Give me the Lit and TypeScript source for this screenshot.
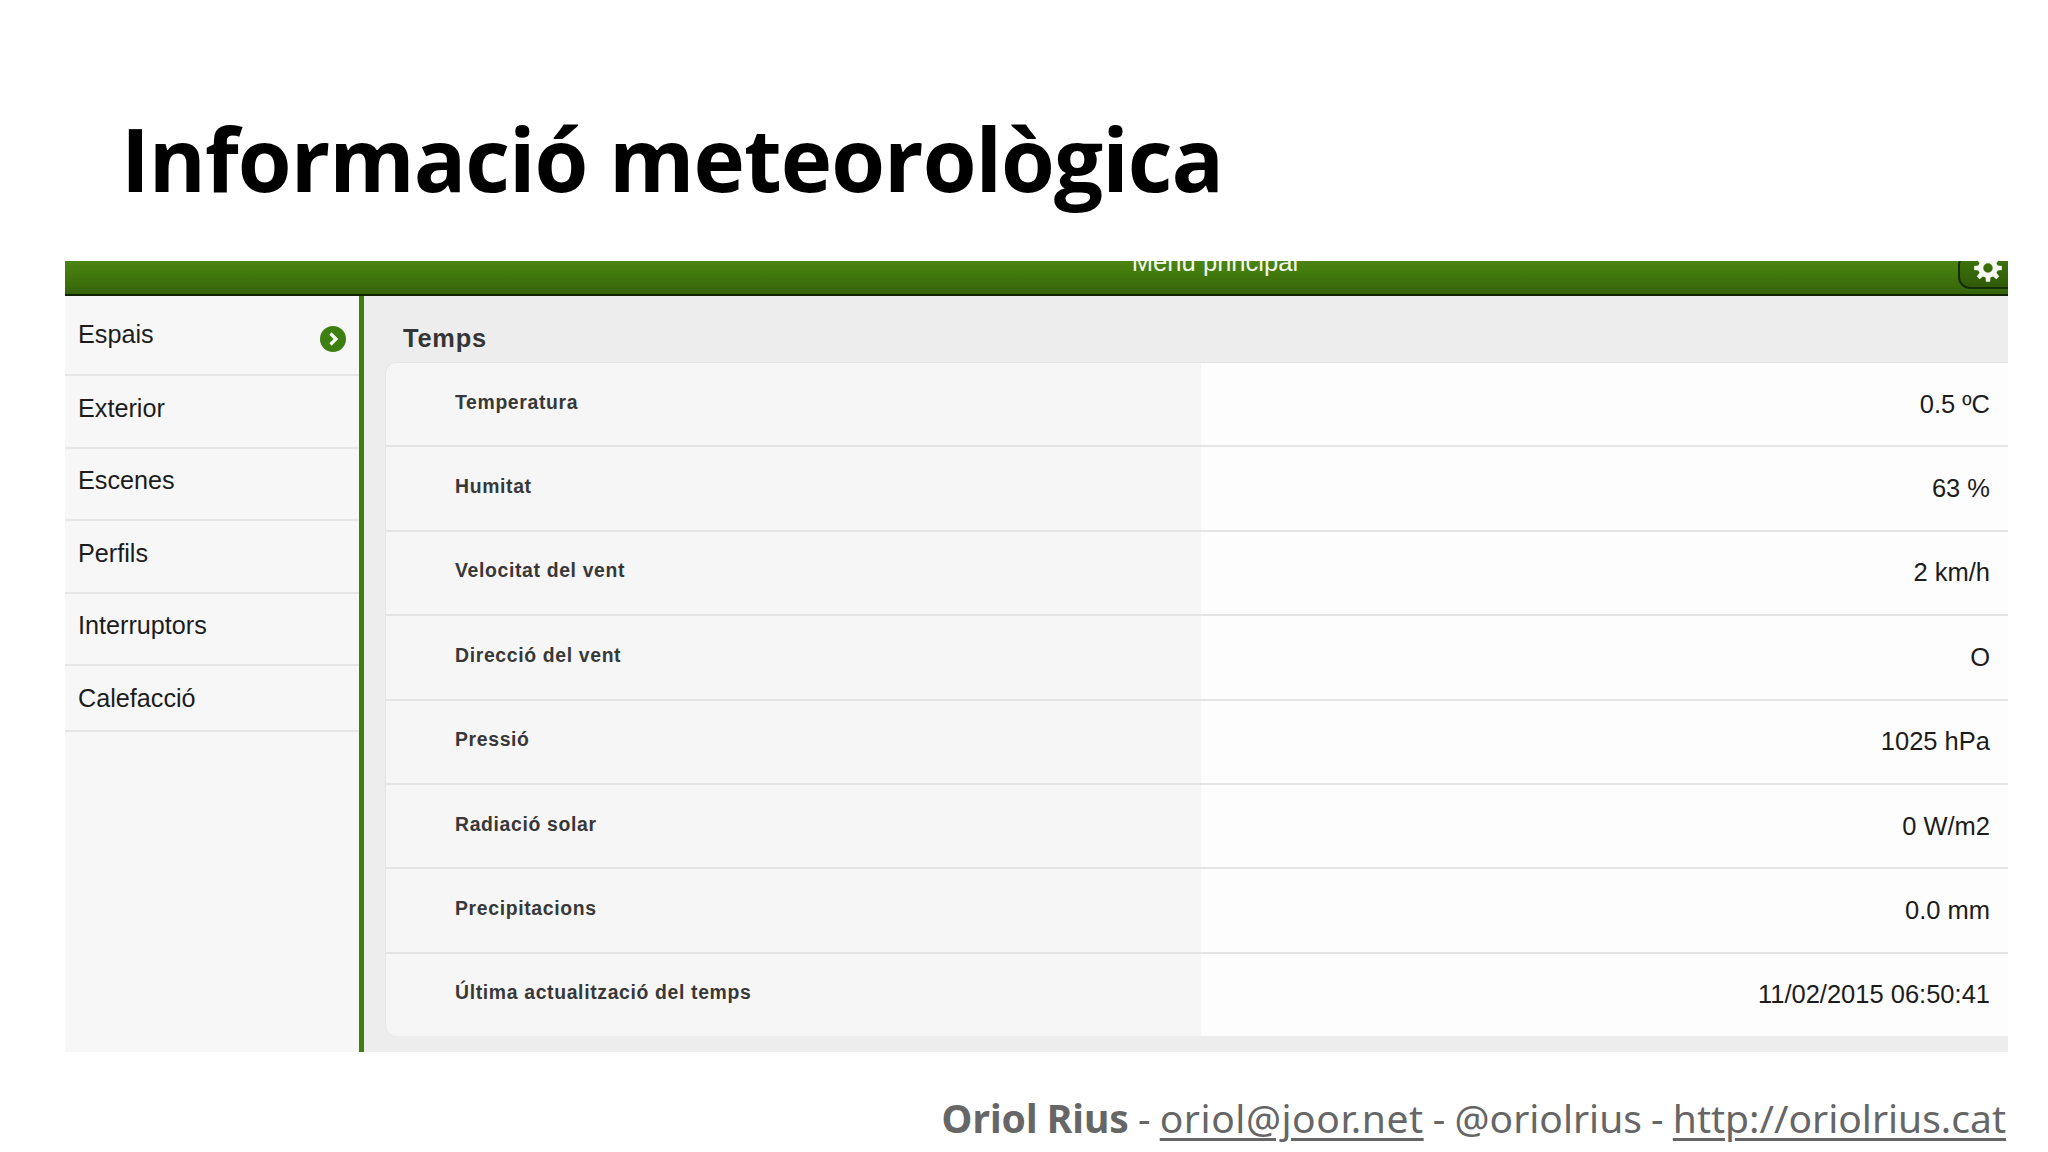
import { LitElement, html, css, svg } from "lit";
import { customElement } from "lit/decorators.js";

const MENU = ["Espais", "Exterior", "Escenes", "Perfils", "Interruptors", "Calefacció"];
const ROWS: [string, string][] = [
  ["Temperatura", "0.5 ºC"],
  ["Humitat", "63 %"],
  ["Velocitat del vent", "2 km/h"],
  ["Direcció del vent", "O"],
  ["Pressió", "1025 hPa"],
  ["Radiació solar", "0 W/m2"],
  ["Precipitacions", "0.0 mm"],
  ["Última actualització del temps", "11/02/2015 06:50:41"],
];

function gearPath(): string {
  const pts: string[] = [];
  const n = 8;
  for (let i = 0; i < n; i++) {
    const a = (i / n) * Math.PI * 2;
    const s = Math.PI / n;
    const p = (r: number, t: number) => `${(13 + r * Math.cos(t)).toFixed(2)} ${(13 + r * Math.sin(t)).toFixed(2)}`;
    pts.push(`${i ? "L" : "M"}${p(9.2, a - s * 0.62)}`, `L${p(13, a - s * 0.38)}`, `L${p(13, a + s * 0.38)}`, `L${p(9.2, a + s * 0.62)}`);
  }
  return pts.join(" ") + " Z M13 8.6 A4.4 4.4 0 1 0 13 17.4 A4.4 4.4 0 1 0 13 8.6 Z";
}

@customElement("app-root")
export class AppRoot extends LitElement {
  static styles = css`
    :host { display: block; width: 2048px; height: 1152px; background: #fff; overflow: hidden; }
    .title { height: 261px; box-sizing: border-box; padding: 106px 0 0 121px; margin: 0;
      font: 700 87px/1.2 "Open Sans", sans-serif; color: #000; letter-spacing: -0.97px; white-space: nowrap; }
    .shot { margin-left: 65px; width: 1943px; height: 791px; display: flex; flex-direction: column; overflow: hidden; }
    .bar { position: relative; height: 35px; flex: none; box-sizing: border-box; overflow: hidden;
      background: linear-gradient(#4a8412, #447c0e 30%, #356409); border-bottom: 2px solid #0f2402;
      text-align: center; padding-left: 357px; }
    .bar-title { display: block; margin-top: -15px; font: 400 25.6px/32px "Liberation Sans", sans-serif; color: #f2f7ee; }
    .gear-btn { position: absolute; left: 1893px; top: -8px; width: 70px; height: 36px; box-sizing: border-box;
      background: linear-gradient(#3f770d, #2f5a08); border: 2px solid #142c03; border-radius: 12px; }
    .gear-btn svg { position: absolute; left: 14px; top: -1px; display: block; }
    .body { flex: 1; display: flex; min-height: 0; }
    .side { width: 299px; flex: none; box-sizing: border-box; background: #f7f7f8; border-right: 5px solid #3f7f0e; }
    .item { height: 72.5px; box-sizing: border-box; border-bottom: 2px solid #e7e7e8; display: flex; align-items: center;
      justify-content: space-between; padding: 0 13px 7px; font: 400 25.2px/30px "Liberation Sans", sans-serif; color: #1c1c1c; }
    .item:first-child { height: 80px; padding-bottom: 3px; }
    .item:last-child { height: 66px; padding-bottom: 1px; }
    .chev { display: block; margin-top: 10px; }
    .main { flex: 1; min-width: 0; background: #eeeded; padding: 0 0 16px 21px; display: flex; flex-direction: column; }
    .main h2 { margin: 0; height: 66px; box-sizing: border-box; padding: 27px 0 0 18px;
      font: 700 25.4px/30px "Liberation Sans", sans-serif; letter-spacing: 0.8px; color: #353535; }
    .card { flex: 1; display: flex; flex-direction: column; border-radius: 12px 0 0 12px; overflow: hidden;
      border: 1px solid #e6e5e6; border-right: 0; border-bottom: 0; }
    .row { flex: 1; display: grid; grid-template-columns: 815px 1fr; min-height: 0; border-bottom: 2px solid #e5e4e5; }
    .row:last-child { border-bottom: 0; }
    .k { background: #f7f6f7; display: flex; align-items: center; padding: 0 0 5px 69px;
      font: 700 19.4px/24px "Liberation Sans", sans-serif; letter-spacing: 0.65px; color: #383838; }
    .v { background: #fdfdfd; display: flex; align-items: center; justify-content: flex-end; padding: 0 18px 1px 0;
      font: 400 25.5px/30px "Liberation Sans", sans-serif; color: #1c1c1c; }
    .foot { margin: 0; height: 100px; box-sizing: border-box; padding: 38px 42px 0 0; text-align: right;
      font: 400 39px/56px "Noto Sans", sans-serif; color: #666; white-space: nowrap; word-spacing: -1px; }
    .foot b { font-weight: 700; }
    .foot a { color: inherit; text-decoration: underline; text-underline-offset: 5px; text-decoration-thickness: 3px; }
    .foot a.mail { letter-spacing: 0.55px; }
  `;

  render() {
    return html`
      <h1 class="title">Informació meteorològica</h1>
      <section class="shot">
        <header class="bar">
          <span class="bar-title">Menu principal</span>
          <span class="gear-btn">
            <svg width="28" height="28" viewBox="0 0 26 26">
              ${svg`<path d=${gearPath()} fill="#f4f8f0" fill-rule="evenodd"></path>`}
            </svg>
          </span>
        </header>
        <div class="body">
          <nav class="side">
            ${MENU.map((m, i) => html`<div class="item"><span>${m}</span>${i === 0 ? html`
              <svg class="chev" width="26" height="26" viewBox="0 0 26 26">
                <circle cx="13" cy="13" r="13" fill="#3d7f10"></circle>
                <path d="M10.5 7.5 L16 13 L10.5 18.5" fill="none" stroke="#f4f8f0" stroke-width="3.2"></path>
              </svg>` : ""}</div>`)}
          </nav>
          <main class="main">
            <h2>Temps</h2>
            <div class="card">
              ${ROWS.map(([k, v]) => html`<div class="row"><div class="k">${k}</div><div class="v">${v}</div></div>`)}
            </div>
          </main>
        </div>
      </section>
      <p class="foot"><b>Oriol Rius</b> - <a class="mail">oriol@joor.net</a> - @oriolrius - <a>http://oriolrius.cat</a></p>
    `;
  }
}
